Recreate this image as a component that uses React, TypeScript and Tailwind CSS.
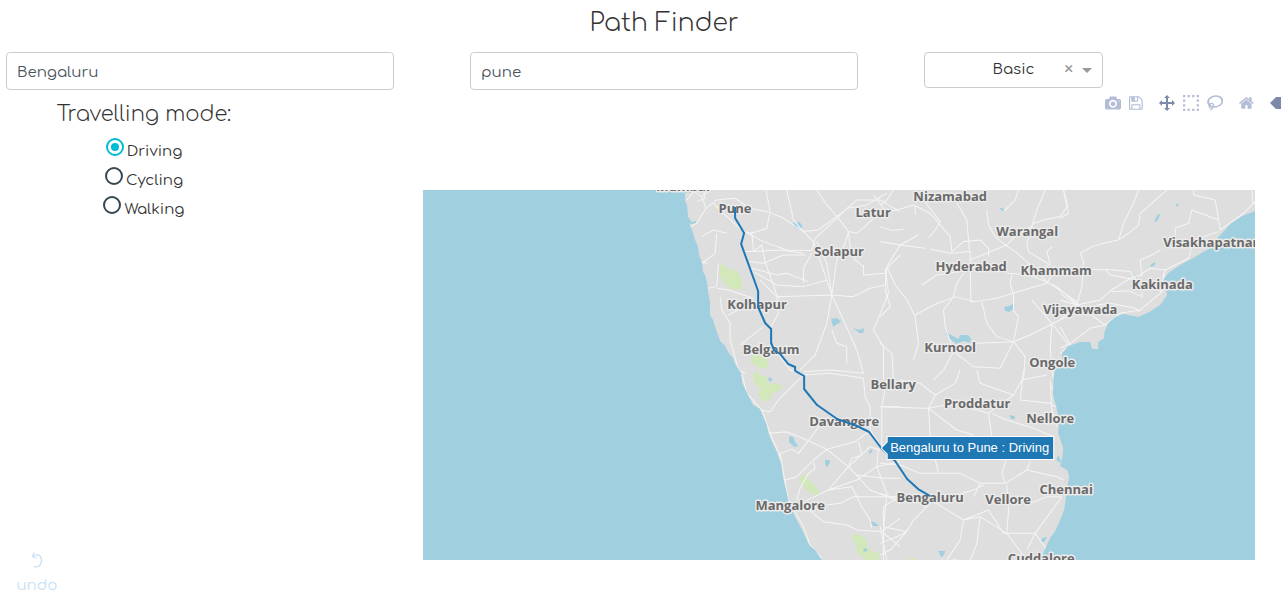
import { useState } from "react";
import type { ReactNode } from "react";

type ModeIcon = { label: string; width: number; d: string; active?: boolean };

const camera: ModeIcon = {
  label: "Download plot as a png",
  width: 1000,
  d: "m500 450c-83 0-150-67-150-150 0-83 67-150 150-150 83 0 150 67 150 150 0 83-67 150-150 150z m400 150h-120c-16 0-34 13-39 29l-31 93c-6 15-23 28-40 28h-340c-16 0-34-13-39-28l-31-94c-6-15-23-28-40-28h-120c-55 0-100-45-100-100v-450c0-55 45-100 100-100h800c55 0 100 45 100 100v450c0 55-45 100-100 100z m-400-550c-138 0-250 112-250 250 0 138 112 250 250 250 138 0 250-112 250-250 0-138-112-250-250-250z m365 380c-19 0-35 16-35 35 0 19 16 35 35 35 19 0 35-16 35-35 0-19-16-35-35-35z",
};
const disk: ModeIcon = {
  label: "Edit in Chart Studio",
  width: 857,
  d: "m214-7h429v214h-429v-214z m500 0h72v500q0 8-6 21t-11 20l-157 156q-5 6-19 12t-22 5v-232q0-22-15-38t-38-16h-322q-22 0-37 16t-16 38v232h-72v-714h72v232q0 22 16 38t37 16h465q22 0 38-16t15-38v-232z m-214 518v178q0 8-5 13t-13 5h-107q-7 0-13-5t-5-13v-178q0-8 5-13t13-5h107q7 0 13 5t5 13z m357-18v-518q0-22-15-38t-38-16h-750q-23 0-38 16t-16 38v750q0 22 16 38t38 16h517q23 0 50-12t42-26l156-157q16-15 27-42t11-49z",
};
const pan: ModeIcon = {
  label: "Pan",
  width: 1000,
  active: true,
  d: "m1000 350l-187 188 0-125-250 0 0 250 125 0-188 187-187-187 125 0 0-250-250 0 0 125-188-188 186-187 0 125 252 0 0-250-125 0 187-188 188 188-125 0 0 250 250 0 0-126 187 188z",
};
const boxSelect: ModeIcon = {
  label: "Box Select",
  width: 1000,
  d: "m0 850l0-143 143 0 0 143-143 0z m286 0l0-143 143 0 0 143-143 0z m285 0l0-143 143 0 0 143-143 0z m286 0l0-143 143 0 0 143-143 0z m-857-286l0-143 143 0 0 143-143 0z m857 0l0-143 143 0 0 143-143 0z m-857-285l0-143 143 0 0 143-143 0z m857 0l0-143 143 0 0 143-143 0z m-857-286l0-143 143 0 0 143-143 0z m286 0l0-143 143 0 0 143-143 0z m285 0l0-143 143 0 0 143-143 0z m286 0l0-143 143 0 0 143-143 0z",
};
const lasso: ModeIcon = {
  label: "Lasso Select",
  width: 1031,
  d: "m1018 538c-36 207-290 336-568 286-277-48-473-256-436-463 10-57 36-108 76-151-13-66 11-137 68-183 34-28 75-41 114-42l-55-70 0 0c-2-1-3-2-4-3-10-14-8-34 5-45 14-11 34-8 45 4 1 1 2 3 2 5l0 0 113 140c16 11 31 24 45 40 4 3 6 7 8 11 48-3 100 0 151 9 278 48 473 255 436 462z m-624-379c-80 14-149 48-197 96 42 42 109 47 156 9 33-26 47-66 41-105z m-187-74c-19 16-33 37-39 60 50-32 109-55 174-68-42-25-95-24-135 8z m360 75c-34-7-69-9-102-8 8 62-16 128-68 170-73 59-175 54-244-5-9 20-16 40-20 61-28 159 121 317 333 354s407-60 434-217c28-159-121-318-333-355z",
};
const home: ModeIcon = {
  label: "Reset view",
  width: 929,
  d: "m786 296v-267q0-15-11-26t-25-10h-214v214h-143v-214h-214q-15 0-25 10t-11 26v267q0 1 0 2t0 2l321 264 321-264q1-1 1-4z m124 39l-34-41q-5-5-12-6h-2q-7 0-12 3l-386 322-386-322q-7-4-13-4-7 2-12 7l-35 41q-4 5-3 13t6 12l401 334q18 15 42 15t43-15l136-114v109q0 8 5 13t13 5h107q8 0 13-5t5-13v-227l122-102q5-5 6-12t-4-13z",
};
const hoverTag: ModeIcon = {
  label: "Toggle show closest data on hover",
  width: 1500,
  active: true,
  d: "m375 725l0 0-375-375 375-374 0-1 1125 0 0 750-1125 0z",
};

const modeGroups: ModeIcon[][] = [[camera, disk], [pan, boxSelect, lasso], [home], [hoverTag]];

function ModeBar() {
  return (
    <div className="-mr-[13px] flex shrink-0 justify-end gap-4 pt-[5px]">
      {modeGroups.map((group) => (
        <div key={group[0].label} className="flex gap-2">
          {group.map((icon) => (
            <button
              key={icon.label}
              type="button"
              aria-label={icon.label}
              className={icon.active ? "shrink-0 text-[#7c89a9]" : "shrink-0 text-[#b3bdd6]"}
            >
              <svg className="h-4 w-auto" viewBox={`0 0 ${icon.width} 1000`} fill="currentColor">
                <path transform="matrix(1 0 0 -1 0 850)" d={icon.d} />
              </svg>
            </button>
          ))}
        </div>
      ))}
    </div>
  );
}

const cities: [string, number, number][] = [
  ["Mumbai", 683, 191],
  ["Pune", 735, 213],
  ["Latur", 873, 217],
  ["Nizamabad", 950, 201],
  ["Warangal", 1027, 236],
  ["Visakhapatnam", 1214, 247],
  ["Solapur", 839, 256],
  ["Hyderabad", 971, 271],
  ["Khammam", 1056, 275],
  ["Kakinada", 1162, 289],
  ["Kolhapur", 757, 309],
  ["Vijayawada", 1080, 314],
  ["Belgaum", 771, 354],
  ["Kurnool", 950, 352],
  ["Ongole", 1052, 367],
  ["Bellary", 893, 389],
  ["Proddatur", 977, 408],
  ["Nellore", 1050, 423],
  ["Davangere", 844, 426],
  ["Mangalore", 790, 510],
  ["Bengaluru", 930, 502],
  ["Vellore", 1008, 504],
  ["Chennai", 1066, 494],
  ["Cuddalore", 1041, 563],
  ["Salem", 957, 570],
];

const land =
  "M685 190V201L687 205 688 217 691 221 689 223 692 230 695 240 698 247 699 255 702 263 703 272 705 275 707 283 708 292 709 298 710 303 710 315 713 320 715 327 718 335 720 341 725 346 728 352 733 358 735 364 741 373 742 383 748 395 753 405 760 409 766 423 769 435 772 442 777 452 779 459 781 463 783 478 786 490 789 503 795 517 803 532 809 545 815 550 822 560H1042L1043 553 1050 538 1055 531 1060 520 1064 510 1067 487 1069 477 1067 470 1060 466 1062 458 1063 448 1058 433 1059 420 1056 407 1053 395 1053 380 1055 368 1062 358 1062 353 1068 346 1080 342 1090 342 1092 349 1098 349 1098 342 1104 338 1104 333 1108 323 1115 317 1123 314 1138 317 1149 312 1160 305 1167 295 1163 280 1168 273 1180 265 1193 258 1210 248 1217 238 1223 232 1230 224 1242 216 1255 211V190Z";

function Tile({ x, y, children }: { x: number; y: number; children: ReactNode }) {
  return <g transform={`translate(${x} ${y}) scale(0.3333)`}>{children}</g>;
}

function RouteMap() {
  return (
    <svg
      className="h-[370px] w-full"
      viewBox="423 190 832 370"
      preserveAspectRatio="xMidYMid slice"
      role="img"
      aria-label="Driving route from Bengaluru to Pune"
    >
      <clipPath id="land">
        <path d={land} />
      </clipPath>
      <rect x="0" y="0" width="1700" height="800" fill="#a0cfdf" />
      <path fill="#dedede" d={land} />
      <g fill="#a0cfdf">
        <path d="M685 190h8l-2 3h-6zM688 221l4 1 4-1v2l-4 1-4-1z" />
        <path d="M793 222l4 2 1-3 4 4 0 6-2-1-2-1-4-2zM831 319l6-1 4 4-4 2-4 3-1-4zM853 328l6 2 5-2-1 5-4 0z" />
        <path d="M999 208l3 0 3 3-2 1zM1155 219l3-5 2 1-3 6-3 1zM1175 205l4-2-2 4zM1132 272l5 6-2 0zM1151 264l4-2-1 4-4 1zM1004 307l5-1 4-2 0 5-4 3-4-1z" />
        <path d="M945 332l6 3 7 4 2-4 8 0 3 4-1 4-7-2-7 3-7-6zM1009 415l5 1 1 3-4 0zM789 436l4 1 2 5 3 4-4 1-5-5zM825 460l5 0-1 4-2 3-2-2zM869 451l3-2 0 3-3 2zM870 521l4 1 5 4-6 0zM938 551l7 0-2 5-2 1zM1056 460l2-5 3 6-1 2zM1042 538l5-1-3 5-3 0z" />
      </g>
      <g fill="#d2e7ba">
        <path d="M720 263l9 6 8 2 5 9 0 10-10-1-8-5-5-10zM751 357l5-3 6 3 5 1 1 7-3 4-5-1-9-5z" />
        <path d="M753 375l4-5 2 5 8 1 1 8 7-1 8 3-5 5-6 3-3 7-8 0-3-7 2-6-6-4zM799 475l5 2 2-5 2 8 8 6 4 8-5 1-9-5-6-8zM851 536l7-2 7 4 3 10 5 5 6-2 0 9h-14l-8-7-1-9zM908 559l4-2 5 2-2 1z" />
      </g>
      <path fill="#a0cfdf" d="M769 377l3 2-1 3-3-2zM864 548l3 1-1 3-3-1z" />
      <g clipPath="url(#land)" fill="none" stroke="#f5f5f5" strokeWidth="3" strokeLinejoin="round">
        <Tile x={680} y={180}>
          <path d="M20 60L40 35 65 50 78 85 50 130 30 140 0 120M65 50L90 30M70 30L75 55 50 65M78 85L110 60 165 55 210 85 260 95 305 112 370 155 400 185 455 345M100 70L130 100 185 150 250 185 320 210 395 212 405 175 470 115 500 85 560 75 620 40M190 155L215 160 260 145 270 95 258 30M215 155L220 215 300 210 370 220M190 215L220 215 245 195 255 245 290 345 300 355M370 155L415 150 490 95 530 60 600 60 658 95M370 155L340 120 320 30M410 30L440 75 475 115 505 155 530 160 560 135 610 85 580 45M505 155L495 190 470 240 455 345M455 345L520 350 570 325 615 315 620 265 660 225M550 255L550 285 615 280M505 155L510 200 525 240 550 260" />
          <path d="M210 245L250 250 310 225 375 225M215 265L290 285 320 280 385 305M240 300L290 350 455 345M220 275L290 315 370 320 440 300M395 220L370 265 370 310M410 185L440 250 455 345M455 345L440 430 405 525 360 570M455 345L490 420 530 510 550 580M615 265L625 340 580 450 610 500 610 600M290 350L295 400 270 445M110 160L105 220 65 250M115 250L110 320 85 325M110 325L145 330 220 355M120 350L125 390 150 430 150 480 175 570 195 580M145 405L220 365M180 495L250 440M370 585L330 570 285 510M370 575L450 570 550 580M455 450L470 490 500 500 500 550M65 170L100 150 140 160M30 240L80 250" />
        </Tile>
        <Tile x={880} y={180}>
          <path d="M0 185L60 195 135 205M150 208L215 220 270 215 272 365 280 365M0 100L50 90 100 75 150 100 180 135 210 170 215 215M130 60L180 125 165 150 145 175M230 70L260 120 268 215M0 140L35 152 70 148M60 195L20 260 45 315 80 360 105 410 115 490 100 540M60 195L115 165M215 215L250 185 300 180 325 205 325 230M270 240L380 195 425 150 455 140 470 90 495 30M320 90L325 135 345 170 375 195 405 215 440 245 500 305 590 365M455 135L440 190 445 215 510 255M460 130L500 118 540 110 560 80 550 30M415 30L405 60 370 95M500 255L515 285 500 310 430 330 350 355 285 365M285 365L225 350 160 375 105 405M250 280L230 310 220 350 190 390 195 440 220 515 280 560 360 565 400 485M125 315L170 285 240 275M380 280L450 285 530 320 600 380M395 285L390 310 400 345 400 390 415 410 400 485 290 490M305 365L320 430 350 470 400 485 450 465 520 430 600 390M400 485L435 530 430 600M455 360L515 430 565 495M515 430L510 510 520 600M515 200L500 215 510 250M20 265L15 330 30 380 0 410M220 515L190 570 160 600M40 600L35 520 0 490M105 80V105M40 30L20 60 0 75" />
        </Tile>
        <Tile x={1060} y={180}>
          <path d="M10 30L18 60 25 100 0 115M235 30L220 70 190 130 175 180 130 190 95 200 60 220 70 245 65 320 50 375 0 340M320 30L280 65 240 100 235 135 205 160 175 180M400 30L400 45 465 60 475 120 395 90 385 130 345 145 345 165M475 120L480 150 550 100 585 65M575 30L578 75M475 155L400 180 385 235 315 270 270 265 240 285 210 295 155 330 120 360 50 375 0 420M300 210L275 225 240 240 245 290M135 268L210 275 230 300 150 285 135 268M95 268L135 270M155 335L205 332 245 350 245 335M110 375L150 370 225 385 240 395M50 375L135 435 90 445 30 490 0 505M135 435L180 400 240 390 300 340 315 270M50 375L0 360M0 440L30 495 0 520M310 280L305 340" />
        </Tile>
        <Tile x={680} y={370}>
          <path d="M265 190L320 185 385 212 420 165M385 212L355 250 335 238 300 250M385 212L440 238 525 215 565 185M440 238L400 270 350 320 315 330M440 238L505 290 570 360 660 395M400 275L405 295 385 310 360 355 350 390M445 360L500 295 570 230 600 240M505 290L515 265 545 255 535 215M360 400L445 360 515 350 530 380 545 410 570 450 575 475M445 360L530 330 590 290 660 275M595 235L590 290 605 330 620 370 610 480 610 570M370 410L400 430 430 455 500 465 530 480 605 485 660 445M605 485L660 530M530 315L610 325 660 325M480 400L520 380 660 380M240 120L270 125 295 90 370 15M370 15L450 10 550 25 555 80 570 110 570 180M605 110L605 235M605 110L660 110M570 180L605 235M620 30L605 110M300 250L310 310 325 390 370 470 390 525 425 565M185 10L200 70 245 120 270 190 300 260M440 405L480 400M330 400L390 420" />
        </Tile>
        <Tile x={880} y={370}>
          <path d="M0 110L130 115 145 115 150 200 175 310M145 115L165 75 225 40 240 0M165 75L120 40 60 30M145 115L230 180 280 195M145 115L220 100 325 130 400 75 425 30 500 15M325 130L335 200M430 0L420 90 510 100 560 130M335 130L380 150 460 175 520 200M290 0L300 40 400 75M510 30L515 120 530 170M0 280L60 285 120 310 240 310 300 340 375 340 440 300 450 275M375 340L365 310 380 265M175 310L165 265M300 340L280 380M150 375L230 375 280 360 310 345M160 395L250 450 325 420 370 490 465 490 545 380M250 450L240 510 200 570M250 450L300 440 380 490M380 345L385 420 380 490 410 530 440 570M440 300L530 320 550 330M465 490L500 540M465 490L440 540M0 370L50 385 10 410 10 470 80 485 50 500 0 520M150 400L100 450 75 490 30 540 0 555M0 470L20 570M300 440L290 520 270 570M530 0L515 60M545 380L500 380 450 400" />
        </Tile>
      </g>
      <g
        className="font-['Open_Sans','Noto_Sans',sans-serif] text-[13px] font-bold"
        fill="#6a6a6a"
        stroke="#ebebeb"
        strokeWidth="3"
        strokeLinejoin="round"
        paintOrder="stroke"
        textAnchor="middle"
      >
        {cities.map(([name, x, y]) => (
          <text key={name} x={x} y={y}>
            {name}
          </text>
        ))}
      </g>
      <path
        fill="none"
        stroke="#1f77b4"
        strokeWidth="2"
        strokeLinejoin="round"
        d="M735 207V218L744 233 741 244 758 291V307L765 323 771 329V343L774 350 780 354 788 364 795 367V371L804 376V389L817 405 837 419 857 426 869 432 881 448 895 461 907 479 918 489 930 496"
      />
      <path fill="#1f77b4" stroke="#ffffff" d="M881 448L887 442V436.500H1053.500V459.500H887V454Z" />
      <text
        className="font-['Liberation_Sans',Arial,sans-serif] text-[13px]"
        x="890"
        y="452"
        fill="#ffffff"
      >
        Bengaluru to Pune : Driving
      </text>
    </svg>
  );
}

const modes = ["Driving", "Cycling", "Walking"];

export default function App() {
  const [from, setFrom] = useState("Bengaluru");
  const [to, setTo] = useState("pune");
  const [mode, setMode] = useState("Driving");
  const [style, setStyle] = useState("Basic");
  const field =
    "h-[38px] w-full rounded border border-[#cccccc] bg-white px-[10px] pt-[2px] text-[15px] text-[#4a545c] outline-none";

  return (
    <div className="flex min-h-screen flex-col overflow-x-hidden bg-white font-[Comfortaa,Inter,sans-serif] text-[15px] text-[#333333]">
      <h1 className="pt-[5px] pl-[47px] text-center text-[25px] leading-9 font-light">Path Finder</h1>
      <div className="mt-[11px] grid grid-cols-[388fr_398fr_179fr] gap-x-[66px] pr-[178px] pl-[6px]">
        <input aria-label="From" className={field} value={from} onChange={(e) => setFrom(e.target.value)} />
        <div className="pl-[10px]">
          <input aria-label="To" className={field} value={to} onChange={(e) => setTo(e.target.value)} />
        </div>
        <div className="relative h-9">
          <select
            aria-label="Map style"
            className="h-9 w-full appearance-none rounded border border-[#cccccc] bg-white text-center text-[15px] outline-none"
            value={style}
            onChange={(e) => setStyle(e.target.value)}
          >
            <option value=""></option>
            <option>Basic</option>
            <option>Streets</option>
            <option>Satellite</option>
          </select>
          <button
            type="button"
            aria-label="Clear map style"
            className="absolute top-[9px] right-[30px] text-[18px] leading-4 text-[#999999]"
            onClick={() => setStyle("")}
          >
            ×
          </button>
          <svg className="pointer-events-none absolute top-4 right-[11px] h-[5px] w-[10px]" viewBox="0 0 10 5">
            <path d="M0 0H10L5 5Z" fill="#999999" />
          </svg>
        </div>
      </div>
      <div className="flex grow">
        <aside className="flex w-[33%] shrink-0 flex-col">
          <fieldset className="flex w-[288px] flex-col items-center">
            <legend className="w-[284px] pt-[6px] text-center text-[21px] leading-9 font-light">
              Travelling mode:
            </legend>
            <div className="flex flex-col items-center pt-1">
              {modes.map((name) => (
                <label key={name} className="flex h-[29px] items-start gap-[3px]">
                  <input
                    type="radio"
                    name="mode"
                    value={name}
                    checked={mode === name}
                    onChange={() => setMode(name)}
                    className="mt-[2px] size-[18px] appearance-none rounded-full border-2 border-[#37474f] p-[3px] checked:border-[#00bcd4] checked:bg-[#00bcd4] checked:bg-clip-content"
                  />
                  <span className="pt-1 leading-6">{name}</span>
                </label>
              ))}
            </div>
          </fieldset>
          <button
            type="button"
            className="mt-auto ml-4 flex w-[42px] flex-col items-center gap-3 text-[#c7dff5]"
          >
            <svg className="h-4 w-3" viewBox="0 0 12 16" fill="none" stroke="currentColor" strokeWidth="1.300">
              <path d="M2.500 4C8 1 10.500 4.500 10.500 8.500 10.500 13.500 7 16 3 14.500" />
              <path d="M3 0.500L1.500 4.500 5.500 6" />
            </svg>
            <span className="leading-3">undo</span>
          </button>
        </aside>
        <main className="flex min-w-0 grow flex-col">
          <ModeBar />
          <div className="mt-[79px] pr-[26px] pb-8">
            <RouteMap />
          </div>
        </main>
      </div>
    </div>
  );
}
